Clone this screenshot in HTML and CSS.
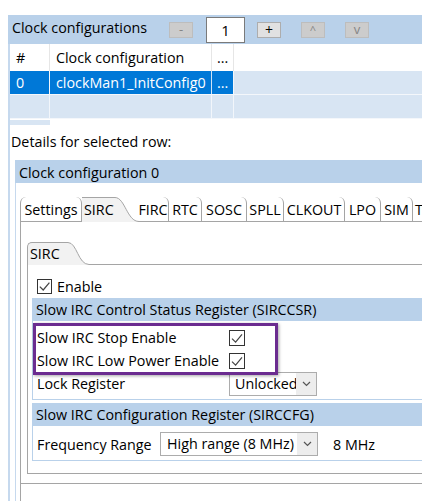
FILE: index.html
```html
<!DOCTYPE html>
<html>
<head>
<meta charset="utf-8">
<title>Clock configurations</title>
<link rel="stylesheet" href="styles.css">
</head>
<body>
<div class="master">
  <div class="mhead">
    <div class="mtitle">Clock configurations</div>
    <div class="btn btn-dis">-</div>
    <div class="count">1</div>
    <div class="btn btn-on">+</div>
    <div class="btn btn-dis gap20 caret">^</div>
    <div class="btn btn-dis gap20">v</div>
  </div>
  <div class="table">
    <div class="trow thead">
      <div class="cell c1">#</div>
      <div class="cell c2">Clock configuration</div>
      <div class="cell c3">...</div>
      <div class="cell cfill"></div>
    </div>
    <div class="trow tdata tsel">
      <div class="cell c1">0</div>
      <div class="cell c2">clockMan1_InitConfig0</div>
      <div class="cell c3">...</div>
      <div class="cell cfill"></div>
    </div>
    <div class="trow tdata">
      <div class="cell c1"></div>
      <div class="cell c2"></div>
      <div class="cell c3"></div>
      <div class="cell cfill"></div>
    </div>
    <div class="tstub"><div class="stubcell"></div></div>
  </div>
  <div class="dlabel">Details for selected row:</div>
  <div class="detail">
    <div class="dhead">Clock configuration 0</div>
    <div class="folder">
      <div class="tabs">
        <div class="tab tab-first w62">Settings</div>
        <div class="tabsel">
          <div class="tabsel-body">SIRC</div>
          <svg class="tabcurve" width="24" height="25" viewBox="0 0 24 25">
            <path d="M0 0 L0 0.5 C10 0.5 12 24.5 24 24.5 L24 25 L0 25 Z" fill="#f2f2f2"/>
            <path d="M0 0.5 C10 0.5 12 24.5 24 24.5" fill="none" stroke="#a5a5a5" stroke-width="1"/>
          </svg>
        </div>
        <div class="tab w31">FIRC</div>
        <div class="tab w33">RTC</div>
        <div class="tab w45">SOSC</div>
        <div class="tab w37">SPLL</div>
        <div class="tab w61">CLKOUT</div>
        <div class="tab w36">LPO</div>
        <div class="tab w32">SIM</div>
        <div class="tab tab-last">T</div>
        <div class="tabfill"></div>
      </div>
      <div class="tabbody">
        <div class="sub">
          <div class="subtabs">
            <div class="subtab">SIRC</div>
            <svg class="subcurve" width="21" height="23" viewBox="0 0 21 23">
              <path d="M0 0 L0 0.5 C9 0.5 10 22.5 21 22.5 L21 23 L0 23 Z" fill="#f2f2f2"/>
              <path d="M0 0.5 C9 0.5 10 22.5 21 22.5" fill="none" stroke="#a5a5a5" stroke-width="1"/>
            </svg>
            <div class="subfill"></div>
          </div>
          <div class="subbody">
            <div class="enable">
              <svg class="chk15" width="15" height="15" viewBox="0 0 15 15">
                <rect x="0.5" y="0.5" width="14" height="14" fill="#fff" stroke="#333"/>
                <path d="M2.8 7.6 L6.2 11 L12.4 3.6" fill="none" stroke="#444" stroke-width="1.2"/>
              </svg>
              <span class="enable-text">Enable</span>
            </div>
            <div class="group g1">
              <div class="ghead">Slow IRC Control Status Register (SIRCCSR)</div>
              <div class="gbody">
                <div class="grow">
                  <div class="glabel">Slow IRC Stop Enable</div>
                  <svg width="16" height="16" viewBox="0 0 16 16">
                    <rect x="0.5" y="0.5" width="15" height="15" fill="#fff" stroke="#333"/>
                    <path d="M3 8.6 L6.6 12.2 L13 4.4" fill="none" stroke="#444" stroke-width="1.2"/>
                  </svg>
                </div>
                <div class="grow">
                  <div class="glabel">Slow IRC Low Power Enable</div>
                  <svg width="16" height="16" viewBox="0 0 16 16">
                    <rect x="0.5" y="0.5" width="15" height="15" fill="#fff" stroke="#333"/>
                    <path d="M3 8.6 L6.6 12.2 L13 4.4" fill="none" stroke="#444" stroke-width="1.2"/>
                  </svg>
                </div>
                <div class="grow">
                  <div class="glabel">Lock Register</div>
                  <div class="select sel-lock">
                    <div class="sval">Unlocked</div>
                    <div class="sarr">
                      <svg width="9" height="6" viewBox="0 0 9 6"><path d="M1 1 L4.5 4.5 L8 1" fill="none" stroke="#555" stroke-width="1.2"/></svg>
                    </div>
                  </div>
                </div>
              </div>
              <div class="highlight"></div>
            </div>
            <div class="group g2">
              <div class="ghead">Slow IRC Configuration Register (SIRCCFG)</div>
              <div class="gbody gbody2">
                <div class="grow grow2">
                  <div class="glabel glabel2">Frequency Range</div>
                  <div class="select sel-freq">
                    <div class="sval sval2">High range (8 MHz)</div>
                    <div class="sarr">
                      <svg width="9" height="6" viewBox="0 0 9 6"><path d="M1 1 L4.5 4.5 L8 1" fill="none" stroke="#555" stroke-width="1.2"/></svg>
                    </div>
                  </div>
                  <div class="freq">8 MHz</div>
                </div>
              </div>
            </div>
          </div>
        </div>
        <div class="tabfoot"></div>
      </div>
    </div>
  </div>
</div>
</body>
</html>
```

FILE: styles.css
```css
* { box-sizing: border-box; }
html, body { margin: 0; padding: 0; }
body {
  width: 422px;
  height: 501px;
  overflow: hidden;
  background: #fff;
  color: #000;
  font-family: "Open Sans", "Noto Sans", "DejaVu Sans", sans-serif;
  font-size: 14.3px;
}

/* master panel */
.master {
  margin: 15px 0 0 8px;
  border-left: 2px solid #c6d9ee;
  height: 486px;
}
.mhead {
  height: 29px;
  margin-left: -2px;
  padding-left: 2px;
  background: #b9d1ea;
  display: flex;
  align-items: center;
}
.mtitle {
  width: 159px;
  flex-shrink: 0;
  padding-left: 2px;
  align-self: flex-start;
  line-height: 26px;
  white-space: nowrap;
}
.btn {
  width: 24px;
  height: 16px;
  flex-shrink: 0;
  display: flex;
  align-items: center;
  justify-content: center;
  font-size: 13px;
  line-height: 1;
  border: 1px solid #bdbdbd;
  background: #cccccc;
  color: #858585;
}
.btn-on {
  background: #e1e1e1;
  border-color: #adadad;
  color: #000;
  font-size: 14px;
}
.caret { align-items: flex-start; padding-top: 1px; font-size: 11px; }
.gap20 { margin-left: 20px; }
.count {
  margin: 0 12px 0 13px;
  width: 39px;
  height: 26px;
  flex-shrink: 0;
  background: #fff;
  border: 1px solid #7a7a7a;
  text-align: center;
  line-height: 24px;
  font-size: 15px;
}

/* table */
.trow { display: flex; }
.thead { height: 27px; line-height: 27px; background: #fff; }
.thead .cell { border-right: 1px solid #e6e6e6; }
.tdata { height: 24px; line-height: 23px; background: #d8e5f3; border-bottom: 1px solid #f4f7fb; }
.tdata .cell { border-right: 1px solid #f2f6fb; }
.cell { flex-shrink: 0; white-space: nowrap; overflow: hidden; height: 100%; }
.c1 { width: 40px; padding-left: 6px; }
.c2 { width: 162px; padding-left: 6px; }
.c3 { width: 22px; padding-left: 5px; }
.cfill { flex: 1; border-right: none !important; }
.tsel .c1, .tsel .c2, .tsel .c3 { background: #0078d7; color: #fff; }
.tsel .c2 { border-right-color: #cfe3f6; }
.tstub { height: 6px; padding-top: 1px; }
.stubcell { width: 40px; height: 5px; background: #d8e5f3; }

.dlabel {
  margin-top: 7px;
  padding-left: 1px;
  line-height: 20px;
}

/* detail section */
.detail {
  margin: 8px 0 0 5px;
  border-left: 1px solid #c6d9ee;
  height: 342px;
}
.dhead {
  margin-left: -1px;
  padding-left: 4px;
  height: 23px;
  padding-top: 1px;
  line-height: 23px;
  background: #b9d1ea;
}
.folder { margin: 14px 0 0 4px; }
.tabs {
  display: flex;
  height: 25px;
  overflow: hidden;
  white-space: nowrap;
}
.tab {
  flex-shrink: 0;
  height: 25px;
  padding-top: 1px;
  line-height: 23px;
  text-align: center;
  border-right: 1px solid #a5a5a5;
  border-bottom: 1px solid #a5a5a5;
  border-top-right-radius: 6px;
}
.tab-first { border-left: 1px solid #a5a5a5; border-top-left-radius: 6px; }
.tab-last { width: 40px; text-align: left; padding-left: 2px; }
.tabfill { flex: 1; border-bottom: 1px solid #a5a5a5; }
.w62 { width: 62px; }
.w31 { width: 31px; }
.w33 { width: 33px; }
.w45 { width: 45px; }
.w37 { width: 37px; }
.w61 { width: 61px; }
.w36 { width: 36px; }
.w32 { width: 32px; }
.tabsel { display: flex; flex-shrink: 0; width: 57px; margin-right: -1px; position: relative; z-index: 1; }
.tabsel-body {
  width: 33px;
  height: 25px;
  padding-left: 2px;
  line-height: 23px;
  background: #f2f2f2;
  border-top: 1px solid #a5a5a5;
  white-space: nowrap;
}
.tabcurve { display: block; flex-shrink: 0; }

.tabbody {
  border-left: 1px solid #a5a5a5;
  padding: 20px 0 0 6px;
  height: 280px;
}

/* nested SIRC folder */
.subtabs { display: flex; height: 23px; }
.subtab {
  width: 41px;
  height: 23px;
  padding-left: 2px;
  line-height: 21px;
  background: #f2f2f2;
  border-left: 1px solid #a5a5a5;
  border-top: 1px solid #a5a5a5;
  border-top-left-radius: 5px;
}
.subcurve { display: block; flex-shrink: 0; }
.subfill { flex: 1; border-bottom: 1px solid #a5a5a5; }
.subbody {
  border-left: 1px solid #a5a5a5;
  border-bottom: 1px solid #a5a5a5;
  padding: 10px 0 12px 4px;
}
.enable {
  height: 22px;
  display: flex;
  align-items: center;
  padding-left: 5px;
}
.chk15 { display: block; }
.enable-text { margin-left: 5px; }

.group {
  position: relative;
  border: 1px solid #b9d1ea;
  border-right: none;
  margin-top: 1px;
}
.g2 { margin-top: 3px; }
.ghead {
  height: 22px;
  line-height: 22px;
  padding-left: 3px;
  background: #b9d1ea;
  white-space: nowrap;
}
.gbody { padding: 5px 0 4px 0; }
.gbody2 { padding: 6px 0 4px 0; }
.grow {
  height: 23px;
  display: flex;
  align-items: center;
  padding-left: 4px;
  white-space: nowrap;
}
.grow2 { height: 24px; }
.glabel { width: 192px; flex-shrink: 0; }
.glabel2 { width: 123px; }
.grow svg { display: block; flex-shrink: 0; }

.select {
  display: flex;
  flex-shrink: 0;
  height: 24px;
  border: 1px solid #acacac;
  background: #fff;
}
.sel-lock { width: 88px; }
.sel-freq { width: 158px; }
.sval {
  flex: 1;
  overflow: hidden;
  white-space: nowrap;
  padding-left: 5px;
  line-height: 22px;
}
.sval2 { padding-left: 6px; }
.sarr {
  width: 20px;
  flex-shrink: 0;
  background: #ededed;
  display: flex;
  align-items: center;
  justify-content: center;
}
.freq { margin-left: 15px; }

.highlight {
  position: absolute;
  left: 0;
  top: 24px;
  width: 245px;
  height: 52px;
  border: 3px solid #6b2c90;
  box-shadow: 1px 1px 3px rgba(0, 0, 0, 0.35);
  pointer-events: none;
}

.tabfoot {
  margin-top: 9px;
  margin-left: -6px;
  border-top: 1px solid #a5a5a5;
  height: 18px;
}
```
